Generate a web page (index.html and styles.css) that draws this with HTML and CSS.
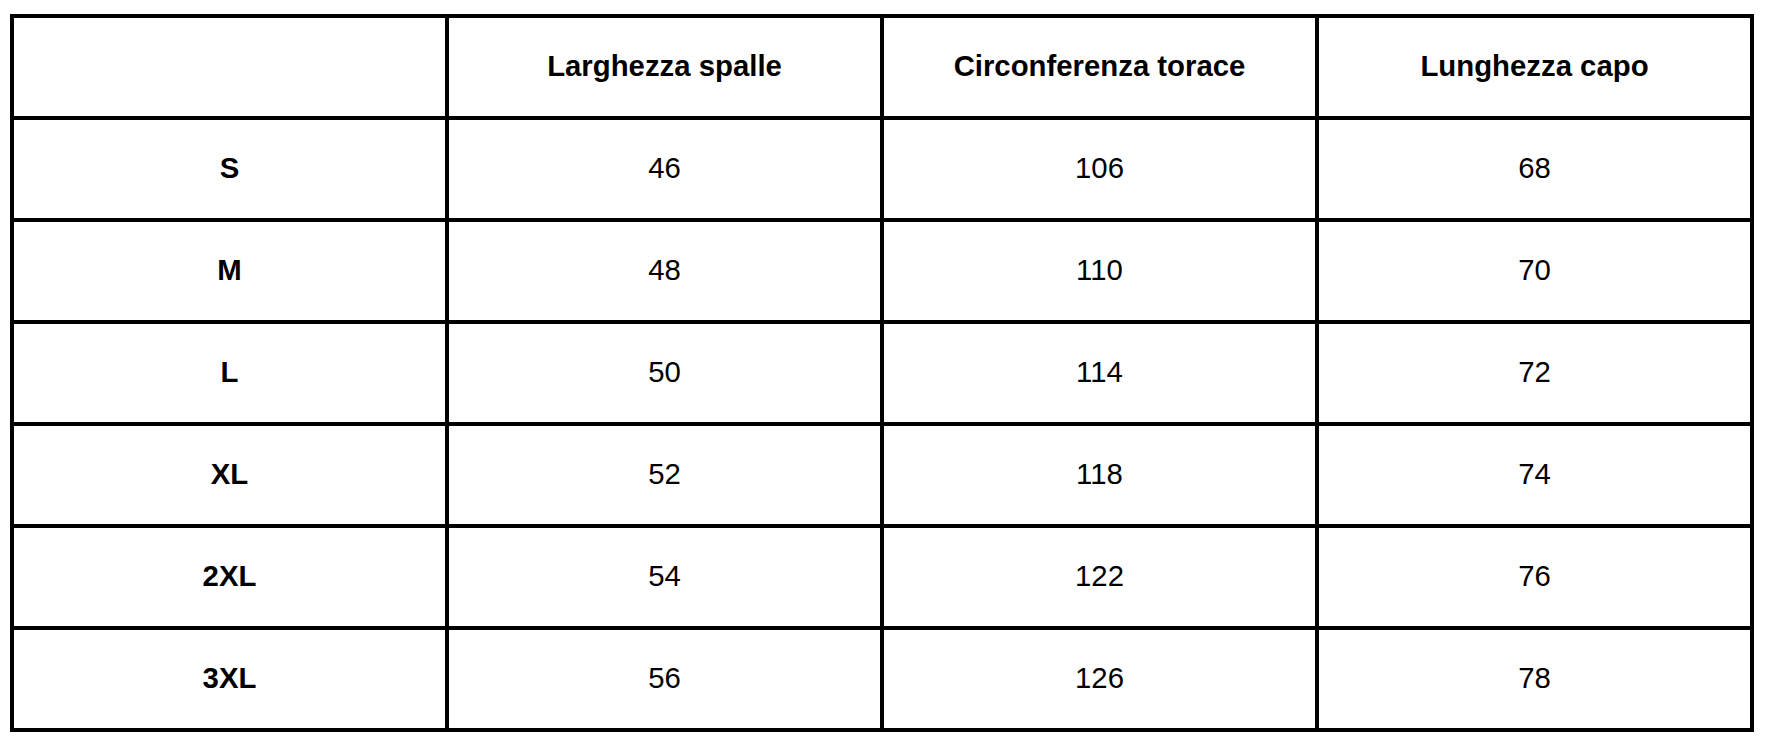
FILE: index.html
```html
<!DOCTYPE html>
<html lang="it">
<head>
<meta charset="utf-8">
<title>Tabella taglie</title>
<link rel="stylesheet" href="styles.css">
</head>
<body>
<div class="page">
<table class="sizes">
  <thead>
    <tr>
      <th></th>
      <th>Larghezza spalle</th>
      <th>Circonferenza torace</th>
      <th>Lunghezza capo</th>
    </tr>
  </thead>
  <tbody>
    <tr><th>S</th><td>46</td><td>106</td><td>68</td></tr>
    <tr><th>M</th><td>48</td><td>110</td><td>70</td></tr>
    <tr><th>L</th><td>50</td><td>114</td><td>72</td></tr>
    <tr><th>XL</th><td>52</td><td>118</td><td>74</td></tr>
    <tr><th>2XL</th><td>54</td><td>122</td><td>76</td></tr>
    <tr><th>3XL</th><td>56</td><td>126</td><td>78</td></tr>
  </tbody>
</table>
</div>
</body>
</html>
```
FILE: styles.css
```css
html, body {
  margin: 0;
  padding: 0;
  background: #ffffff;
}

.page {
  padding: 14px 0 0 10px;
}

.sizes {
  width: 1744px;
  table-layout: fixed;
  border-collapse: separate;
  border-spacing: 0;
  border-top: 4px solid #000;
  border-left: 4px solid #000;
  font-family: "Liberation Sans", Arial, sans-serif;
  font-size: 29.33px;
  color: #000;
}

.sizes tr {
  height: 102px;
}

.sizes th,
.sizes td {
  border-right: 4px solid #000;
  border-bottom: 4px solid #000;
  padding: 0 0 3px 0;
  text-align: center;
  vertical-align: middle;
}

.sizes th {
  font-weight: bold;
}

.sizes td {
  font-weight: normal;
}
```
